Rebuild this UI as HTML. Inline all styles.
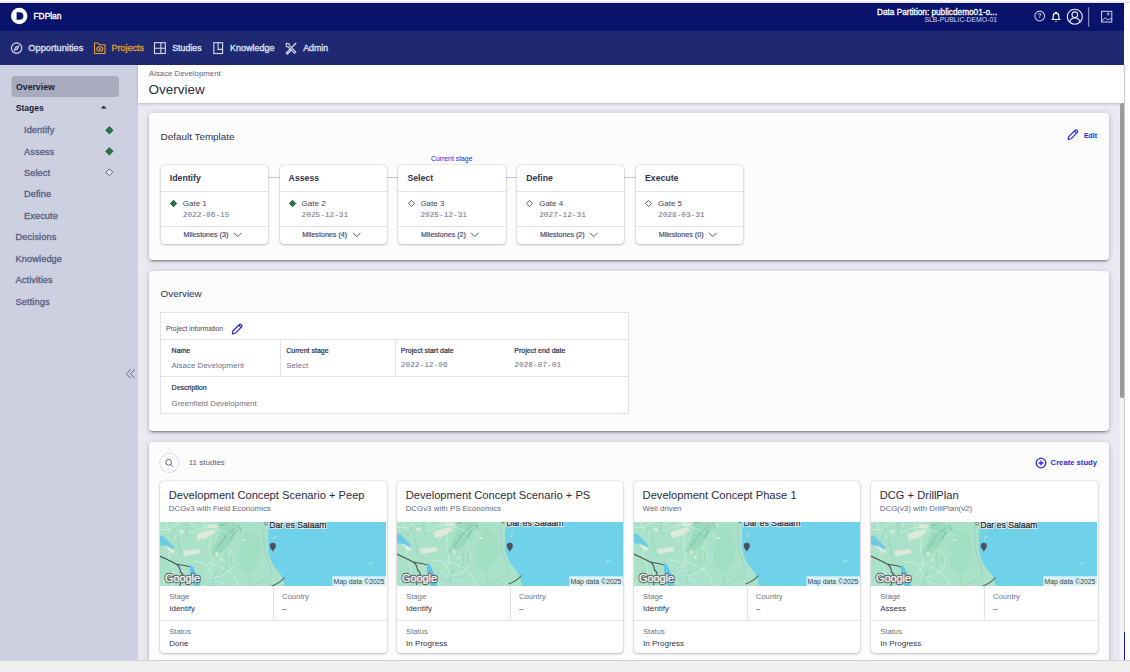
<!DOCTYPE html>
<html>
<head>
<meta charset="utf-8">
<title>FDPlan</title>
<style>
*{box-sizing:border-box;margin:0;padding:0}
html,body{width:1130px;height:672px;overflow:hidden;background:#fff;font-family:"Liberation Sans",sans-serif;color:#3b4060}
.abs{position:absolute}
#root{position:relative;width:1130px;height:672px;overflow:hidden;background:#fff}
#topstrip{left:0;top:0;width:1130px;height:3px;background:linear-gradient(#fbfaf6 0,#f6f5f2 45%,#d9d9da 100%)}
#hdr{left:0;top:3px;width:1124px;height:28px;background:#0a136b}
#nav{left:0;top:31px;width:1124px;height:34px;background:#1f2972}
#side{left:0;top:65px;width:138px;height:596px;background:#ccd0e1}
#main{left:138px;top:65px;width:986px;height:596px;background:#e9eaf2}
#phead{left:138px;top:65px;width:986px;height:37.500px;background:#fff;box-shadow:0 1px 2.500px rgba(0,0,0,.2)}
#bottom{left:0;top:660px;width:1130px;height:12px;background:#efefef;border-top:1px solid #d0d0d0}
.t{position:absolute;white-space:nowrap;line-height:1}
.navt{font-size:9px;color:#dfe1f3;top:43.900px;-webkit-text-stroke:.32px currentColor}
.sbi{font-size:9.3px;color:#585d7f;-webkit-text-stroke:.3px #585d7f;letter-spacing:.05px}
.card{position:absolute;background:#fcfcfd;border-radius:4px;box-shadow:0 3px 1px -2px rgba(0,0,0,.2),0 2px 2px 0 rgba(0,0,0,.14),0 1px 6px 0 rgba(0,0,0,.2)}
.h2{font-size:9.9px;color:#303247}
.stg{position:absolute;top:164.500px;width:107.200px;height:79.500px;background:#fff;border-radius:4px;box-shadow:0 0 1.500px rgba(0,0,0,.28),0 1px 2.500px rgba(0,0,0,.2)}
.ln{position:absolute;left:0;right:0;height:1px;background:#e0e2ee}
.sn{font-size:8.72px;font-weight:bold;color:#32344a}
.gt{font-size:8px;color:#3f4362}
.dt{font-size:7.78px;color:#6a6e88;font-family:"Liberation Mono",monospace}
.ms{font-size:7.15px;color:#454a74;-webkit-text-stroke:.18px #454a74}
.lb{font-size:7px;color:#30344f;-webkit-text-stroke:.22px #30344f}
.vl{font-size:7.9px;color:#6d7189}
.mono{font-family:"Liberation Mono",monospace;font-size:7.8px}
.sc{position:absolute;top:480.700px;width:226.500px;height:172px;background:#fff;border-radius:4px;box-shadow:0 0 1.500px rgba(0,0,0,.28),0 1px 2.500px rgba(0,0,0,.2);overflow:hidden}
.st{font-size:11.14px;color:#2b2d40}
.ss{font-size:7.88px;color:#646780}
.sl{font-size:7.7px;color:#6d7189}
.sv{font-size:8.05px;color:#2f3350}
</style>
</head>
<body>
<div id="root">
<div id="topstrip" class="abs"></div>
<div id="hdr" class="abs"></div>
<div id="nav" class="abs"></div>
<div id="side" class="abs"></div>
<div id="main" class="abs"></div>
<div id="phead" class="abs"></div>

<!-- HEADER -->
<svg class="abs" style="left:10px;top:7px" width="18" height="18" viewBox="0 0 18 18"><circle cx="9.2" cy="9" r="8.2" fill="#fff"/><path d="M6.6 5.2h3a3.8 3.8 0 0 1 0 7.6h-3z" fill="#0a136b"/></svg>
<div class="t" style="left:33.5px;top:11.5px;font-size:8.4px;color:#fff;-webkit-text-stroke:.35px #fff">FDPlan</div>
<div class="t" style="left:877px;top:9.100px;font-size:8.24px;color:#fff;-webkit-text-stroke:.3px #fff">Data Partition: publicdemo01-o...</div>
<div class="t" style="left:924.5px;top:17.300px;font-size:6.83px;color:#d5d8ee">SLB-PUBLIC-DEMO-01</div>
<svg class="abs" style="left:1030px;top:6px" width="90" height="22" viewBox="0 0 90 22" fill="none" stroke="#e8eaf6" stroke-width="1">
<circle cx="9.700" cy="10" r="4.900" stroke-width="1.050" stroke="#c5c9e6"/><text x="9.700" y="12.400" font-size="6.800" font-weight="bold" fill="#c5c9e6" stroke="none" text-anchor="middle" font-family="Liberation Sans">?</text>
<path d="M21.400 13.500h9.200M22.700 13.400c.6-.8.600-2 .6-3.600a2.700 2.700 0 0 1 5.400 0c0 1.600 0 2.800.6 3.600" stroke-width="1.150" stroke="#fff"/><path d="M24.900 15a1.200 1.200 0 0 0 2.200 0z" fill="#fff" stroke="none"/><circle cx="26" cy="6.400" r=".8" fill="#fff" stroke="none"/>
<circle cx="44.800" cy="10.700" r="7.500" stroke-width="1.100"/><circle cx="44.800" cy="8.700" r="2.800" stroke-width="1.100"/><path d="M39.600 16c.8-2.800 2.900-4 5.200-4s4.400 1.200 5.200 4" stroke-width="1.100"/>
<path d="M58.600 1.200v19.500" stroke="#8288bb" stroke-width="1.300"/>
<rect x="71.600" y="5.300" width="10.200" height="10.700" stroke-width="1" stroke="#d5d8f0"/><circle cx="78.200" cy="8" r="1.100" stroke-width=".8" stroke="#d5d8f0"/><path d="M71.600 15l3.700-3.300 2.600 2.200 2.100-1.400 1.800 1.500" stroke-width=".9" stroke="#d5d8f0"/>
</svg>
<!-- NAV -->
<svg class="abs" style="left:9px;top:40px" width="16" height="16" viewBox="0 0 16 16" fill="none" stroke="#d6d9ee" stroke-width="1"><circle cx="7.600" cy="8.100" r="5.200" stroke-width="1.200"/><path d="M10 5.700l-1.300 3.500-3.500 1.300 1.300-3.500z" stroke-width=".9" fill="#d6d9ee" fill-opacity=".55"/></svg>
<div class="t navt" style="left:28.300px;font-size:9.25px">Opportunities</div>
<svg class="abs" style="left:93px;top:41px" width="14" height="14" viewBox="0 0 14 14" fill="none" stroke="#e0a02e" stroke-width="1.100"><path d="M1.500 12.500v-10.500h3.500l1.300 1.700h5.700v8.800z"/><ellipse cx="6.800" cy="7.900" rx="3" ry="2.100"/><circle cx="6.800" cy="7.900" r="1" fill="#e0a02e" stroke="none"/></svg>
<div class="t navt" style="left:111.500px;color:#e0a02e">Projects</div>
<svg class="abs" style="left:153px;top:41px" width="14" height="14" viewBox="0 0 14 14" fill="none" stroke="#d6d9ee" stroke-width="1.100"><rect x="1.500" y="1.700" width="10.800" height="10.800"/><path d="M7.900 1.700v10.800M1.500 7.300h10.800"/></svg>
<div class="t navt" style="left:172.200px;font-size:8.85px">Studies</div>
<svg class="abs" style="left:212px;top:41px" width="14" height="14" viewBox="0 0 14 14" fill="none" stroke="#d6d9ee" stroke-width="1.100"><rect x="1.800" y="1.700" width="8.800" height="10.800"/><path d="M6.100 1.700v6.700h4.500"/></svg>
<div class="t navt" style="left:230px">Knowledge</div>
<svg class="abs" style="left:284px;top:41px" width="14" height="14" viewBox="0 0 14 14" fill="none" stroke="#d6d9ee" stroke-width="1.100" stroke-linecap="round"><path d="M2.200 2.300l2.900.5.400 1.900 6.300 6.300-1.300 1.300-6.300-6.300-1.800-.4z" stroke-width="1.100"/><path d="M11.900 2.200l-4.300 4.300M6.300 8l-4 4 1.100 1.100 4-4" stroke-width="1.300"/></svg>
<div class="t navt" style="left:303.200px;font-size:8.8px">Admin</div>
<!-- SIDEBAR -->
<div class="abs" style="left:11px;top:76px;width:107.500px;height:21px;background:#a8abbe;border-radius:4px;border-left:1.5px solid #e3c050"></div>
<div class="t" style="left:16px;top:83px;font-size:8.720px;font-weight:bold;color:#1b1d30">Overview</div>
<div class="t" style="left:15.700px;top:104.300px;font-size:8.540px;font-weight:bold;color:#1b1d30">Stages</div>
<svg class="abs" style="left:100px;top:104px" width="8" height="6" viewBox="0 0 8 6"><path d="M.7 4.600L3.700 1.700 6.700 4.600z" fill="#1b1d30"/></svg>
<div class="t sbi" style="left:24px;top:126.1px">Identify</div>
<svg class="abs" style="left:104px;top:124.6px" width="11" height="11" viewBox="0 0 11 11"><path d="M5.400 1.700L9 5.300 5.400 8.900 1.800 5.300z" fill="#1f7d3f" stroke="#123d22" stroke-width=".8"/></svg>
<div class="t sbi" style="left:24px;top:147.5px">Assess</div>
<svg class="abs" style="left:104px;top:146.0px" width="11" height="11" viewBox="0 0 11 11"><path d="M5.400 1.700L9 5.300 5.400 8.900 1.800 5.300z" fill="#1f7d3f" stroke="#123d22" stroke-width=".8"/></svg>
<div class="t sbi" style="left:24px;top:168.8px">Select</div>
<svg class="abs" style="left:104px;top:167.3px" width="11" height="11" viewBox="0 0 11 11"><path d="M5.400 1.900L8.800 5.300 5.400 8.700 2 5.300z" fill="#eceef6" stroke="#4a4e6a" stroke-width=".9"/></svg>
<div class="t sbi" style="left:24px;top:190.3px">Define</div>
<div class="t sbi" style="left:24px;top:211.7px">Execute</div>
<div class="t sbi" style="left:15.600px;top:233.2px">Decisions</div>
<div class="t sbi" style="left:15.600px;top:254.6px">Knowledge</div>
<div class="t sbi" style="left:15.600px;top:276.1px">Activities</div>
<div class="t sbi" style="left:15.600px;top:297.7px">Settings</div>
<svg class="abs" style="left:125px;top:368px" width="12" height="12" viewBox="0 0 12 12" fill="none" stroke="#5a5f80" stroke-width=".9"><path d="M5.500 1.300L1.500 5.800l4 4.500M9.700 1.300L5.700 5.800l4 4.500"/></svg>
<!-- PAGEHEAD -->
<div class="t" style="left:149px;top:69.800px;font-size:7.820px;color:#5f6486">Alsace Development</div>
<div class="t" style="left:148.600px;top:83px;font-size:13.460px;color:#2b2d40">Overview</div>
<!-- CARD1 -->
<div class="card" style="left:148.500px;top:113.300px;width:960.500px;height:146.500px"></div>
<div class="t h2" style="left:160.600px;top:132px">Default Template</div>
<svg class="abs" style="left:1066.400px;top:128.200px" width="13.600" height="13.600" viewBox="0 0 15 15" fill="none" stroke="#2424dc" stroke-width="1.250" stroke-linejoin="round"><path d="M2.300 12.700l.8-3.200 7-7a1.300 1.300 0 0 1 1.900 0l.5.500a1.300 1.300 0 0 1 0 1.900l-7 7z"/><path d="M9.300 3.300l2.400 2.400"/></svg>
<div class="t" style="left:1084px;top:132.600px;font-size:6.900px;font-weight:bold;color:#2a2ade">Edit</div>
<div class="t" style="left:431px;top:156.300px;font-size:6.850px;color:#2323e0">Current stage</div>
<div class="abs" style="left:262px;top:176.900px;width:380px;height:1px;background:#c3c7de"></div>
<div class="stg" style="left:160.8px">
<div class="t sn" style="left:9px;top:9.300px">Identify</div>
<div class="ln" style="top:26.500px"></div>
<svg class="abs" style="left:8.300px;top:34.200px" width="9" height="9" viewBox="0 0 9 9"><path d="M4.500 1.300L7.700 4.500 4.500 7.700 1.300 4.500z" fill="#1f7d3f" stroke="#123d22" stroke-width=".8"/></svg>
<div class="t gt" style="left:22px;top:35.500px">Gate 1</div>
<div class="t dt" style="left:22px;top:47.400px">2022-06-15</div>
<div class="ln" style="top:61.500px"></div>
<div class="t ms" style="left:22.700px;top:67.800px">Milestones (3)</div>
<svg class="abs" style="left:72px;top:66.900px" width="10" height="8" viewBox="0 0 10 8" fill="none" stroke="#3d4270" stroke-width=".9"><path d="M1 1.800l3.800 3.800 3.800-3.800"/></svg>
</div>
<div class="stg" style="left:279.6px">
<div class="t sn" style="left:9px;top:9.300px">Assess</div>
<div class="ln" style="top:26.500px"></div>
<svg class="abs" style="left:8.300px;top:34.200px" width="9" height="9" viewBox="0 0 9 9"><path d="M4.500 1.300L7.700 4.500 4.500 7.700 1.300 4.500z" fill="#1f7d3f" stroke="#123d22" stroke-width=".8"/></svg>
<div class="t gt" style="left:22px;top:35.500px">Gate 2</div>
<div class="t dt" style="left:22px;top:47.400px">2025-12-31</div>
<div class="ln" style="top:61.500px"></div>
<div class="t ms" style="left:22.700px;top:67.800px">Milestones (4)</div>
<svg class="abs" style="left:72px;top:66.900px" width="10" height="8" viewBox="0 0 10 8" fill="none" stroke="#3d4270" stroke-width=".9"><path d="M1 1.800l3.800 3.800 3.800-3.800"/></svg>
</div>
<div class="stg" style="left:398.4px">
<div class="t sn" style="left:9px;top:9.300px">Select</div>
<div class="ln" style="top:26.500px"></div>
<svg class="abs" style="left:8.300px;top:34.200px" width="9" height="9" viewBox="0 0 9 9"><path d="M4.500 1.400L7.600 4.500 4.500 7.600 1.400 4.500z" fill="#fff" stroke="#3c405c" stroke-width=".85"/></svg>
<div class="t gt" style="left:22px;top:35.500px">Gate 3</div>
<div class="t dt" style="left:22px;top:47.400px">2025-12-31</div>
<div class="ln" style="top:61.500px"></div>
<div class="t ms" style="left:22.700px;top:67.800px">Milestones (2)</div>
<svg class="abs" style="left:72px;top:66.900px" width="10" height="8" viewBox="0 0 10 8" fill="none" stroke="#3d4270" stroke-width=".9"><path d="M1 1.800l3.800 3.800 3.800-3.800"/></svg>
</div>
<div class="stg" style="left:517.2px">
<div class="t sn" style="left:9px;top:9.300px">Define</div>
<div class="ln" style="top:26.500px"></div>
<svg class="abs" style="left:8.300px;top:34.200px" width="9" height="9" viewBox="0 0 9 9"><path d="M4.500 1.400L7.600 4.500 4.500 7.600 1.400 4.500z" fill="#fff" stroke="#3c405c" stroke-width=".85"/></svg>
<div class="t gt" style="left:22px;top:35.500px">Gate 4</div>
<div class="t dt" style="left:22px;top:47.400px">2027-12-31</div>
<div class="ln" style="top:61.500px"></div>
<div class="t ms" style="left:22.700px;top:67.800px">Milestones (2)</div>
<svg class="abs" style="left:72px;top:66.900px" width="10" height="8" viewBox="0 0 10 8" fill="none" stroke="#3d4270" stroke-width=".9"><path d="M1 1.800l3.800 3.800 3.800-3.800"/></svg>
</div>
<div class="stg" style="left:636.0px">
<div class="t sn" style="left:9px;top:9.300px">Execute</div>
<div class="ln" style="top:26.500px"></div>
<svg class="abs" style="left:8.300px;top:34.200px" width="9" height="9" viewBox="0 0 9 9"><path d="M4.500 1.400L7.600 4.500 4.500 7.600 1.400 4.500z" fill="#fff" stroke="#3c405c" stroke-width=".85"/></svg>
<div class="t gt" style="left:22px;top:35.500px">Gate 5</div>
<div class="t dt" style="left:22px;top:47.400px">2028-03-31</div>
<div class="ln" style="top:61.500px"></div>
<div class="t ms" style="left:22.700px;top:67.800px">Milestones (0)</div>
<svg class="abs" style="left:72px;top:66.900px" width="10" height="8" viewBox="0 0 10 8" fill="none" stroke="#3d4270" stroke-width=".9"><path d="M1 1.800l3.800 3.800 3.800-3.800"/></svg>
</div>
<!-- CARD2 -->
<div class="card" style="left:148.500px;top:270.500px;width:960.500px;height:160.300px"></div>
<div class="t h2" style="left:160.600px;top:289.200px">Overview</div>
<div class="abs" style="left:160px;top:312px;width:469px;height:102px;border:1px solid #e1e2ed;background:#fff"></div>
<div class="abs" style="left:160px;top:339px;width:469px;height:1px;background:#e1e2ed"></div>
<div class="abs" style="left:160px;top:376px;width:469px;height:1px;background:#e1e2ed"></div>
<div class="abs" style="left:280px;top:339px;width:1px;height:37px;background:#e1e2ed"></div>
<div class="abs" style="left:394.500px;top:339px;width:1px;height:37px;background:#e1e2ed"></div>
<div class="t" style="left:166px;top:326.200px;font-size:6.870px;color:#3f4362">Project information</div>
<svg class="abs" style="left:230px;top:321.500px" width="14" height="14" viewBox="0 0 14 14" fill="none" stroke="#1c1cd8" stroke-width="1.100" stroke-linejoin="round"><path d="M2.200 12l.7-3 6.500-6.500a1.200 1.200 0 0 1 1.700 0l.6.600a1.200 1.200 0 0 1 0 1.700l-6.500 6.500z"/><path d="M8.700 3.200l2.300 2.300"/></svg>
<div class="t lb" style="left:171.600px;top:347.400px">Name</div>
<div class="t vl" style="left:171.600px;top:362px">Alsace Development</div>
<div class="t lb" style="left:286.200px;top:347.400px">Current stage</div>
<div class="t vl" style="left:286.200px;top:362px">Select</div>
<div class="t lb" style="left:400.800px;top:347.400px">Project start date</div>
<div class="t vl mono" style="left:400.800px;top:362.300px">2022-12-06</div>
<div class="t lb" style="left:514.300px;top:347.400px">Project end date</div>
<div class="t vl mono" style="left:514.300px;top:362.300px">2028-07-01</div>
<div class="t lb" style="left:171.600px;top:384.400px">Description</div>
<div class="t vl" style="left:171.600px;top:400px">Greenfield Development</div>
<!-- CARD3 -->
<svg width="0" height="0" style="position:absolute"><defs>
<filter id="bl" x="0" y="0" width="100%" height="100%"><feGaussianBlur stdDeviation=".5"/></filter>
<clipPath id="landc"><path d="M-12-12H108.500V0C107.300 8 107.200 21 108 30.500C109.500 37.500 112 42 114.500 45.500C118 50 121 53 122 55.500L128 78H-12z"/></clipPath>
<g id="mapg">
<g filter="url(#bl)">
<rect x="-12" y="-12" width="250" height="90" fill="#70d2ea"/>
<path d="M-12-12H108.500V0C107.300 8 107.200 21 108 30.500C109.500 37.500 112 42 114.500 45.500C118 50 121 53 122 55.500L128 78H-12z" fill="#a9e2c8"/>
<path d="M58 0l14 0 8 6-6 8-8 12-10 8-6-2 6-12 4-10z" fill="#93d6b7" opacity=".7"/>
<path d="M84 8l12 2 6 14-4 18-10 10-10-6 2-16z" fill="#9cdcbe" opacity=".6"/>
<path d="M36 12l16-5 4 3-10 6-9 2zM22 29l17-2 1 4-16 3zM4 24l6 1 5 5-4 1zM55 30l3 0 0 4-3 0zM60 36l2 0 0 3-2 0zM82 17l3 0 0 2-3 0zM19 8l4 0 0 3-4 0zM46 2l12 1-2 3-9 0z" fill="#f5ece0" opacity=".7"/>
<g clip-path="url(#landc)">
<path d="M32.4 5.6 L30.9 0.8 L27.7 -3.0 L24.7 -7.1 L23.7 -12.0 L21.3 -16.3 M8.6 24.3 L9.3 29.2 L8.3 34.1 L9.2 39.1 L11.4 43.5 L13.1 48.3 L12.5 53.2 L11.5 58.1 L11.1 63.1 L8.4 67.3 M4.7 55.1 L3.2 59.9 L1.5 64.6 L-0.6 69.1 L-3.4 73.2 L-4.4 78.1 L-5.8 83.0 M18.8 1.8 L15.6 -2.1 L11.5 -4.9 L8.0 -8.4 L4.2 -11.6 L-0.2 -14.1 L-4.3 -17.0 L-8.5 -19.6 L-13.2 -21.4 L-17.2 -24.4 M69.9 12.1 L65.4 9.9 L60.7 8.3 L55.8 7.1 L51.1 5.3 L46.2 5.6 L41.2 5.9 L36.5 7.8 L32.3 10.3 L27.3 10.9 M42.2 62.3 L46.4 65.0 L49.4 69.0 L53.0 72.4 L56.0 76.5 L58.5 80.8 L60.7 85.3 L63.0 89.7 L63.8 94.6 L62.4 99.4 M47.4 41.5 L52.3 42.4 L57.1 43.8 L61.6 45.9 L66.3 47.9 L70.3 50.7 L73.1 54.9 L76.4 58.7 L77.8 63.5 L79.8 68.0 L81.4 72.8 M49.4 10.3 L49.5 15.3 L50.1 20.2 L48.9 25.1 L49.7 30.0 L50.9 34.9 L51.7 39.8 L50.7 44.7 L48.2 49.0 L44.3 52.2 L41.2 56.1 M41.5 20.1 L43.9 15.7 L44.7 10.8 L44.3 5.8 L42.5 1.1 L40.6 -3.5 L39.2 -8.3 M26.3 -4.7 L21.7 -2.8 L17.5 -0.0 L14.6 4.1 L10.5 6.9 L5.5 7.6 L0.5 7.5 L-4.3 6.3 M45.7 56.0 L50.7 55.9 L55.6 55.4 L60.5 54.3 L64.6 51.5 L69.1 49.2 L72.1 45.2 L73.2 40.3 L72.9 35.4 L70.9 30.8 L68.3 26.5 M5.3 -5.0 L6.1 -0.1 L6.4 4.9 L8.7 9.4 L12.3 12.9 L16.2 16.0 M63.4 61.9 L58.6 60.6 L54.5 57.7 L52.3 53.2 L49.9 48.8 L47.5 44.5 L43.5 41.5 L38.6 40.3 L33.6 39.8 M26.5 53.0 L30.2 56.3 L32.2 60.9 L34.7 65.2 L36.4 69.9 L36.1 74.9" stroke="#d9f2e6" stroke-width=".8" fill="none" opacity=".8"/>
<path d="M75.8 15.9 L74.0 12.3 L71.4 9.3 L68.4 6.6 L64.7 5.1 M77.2 32.3 L78.4 28.5 L80.1 24.9 L82.8 21.8 L86.1 19.6 L88.6 16.5 L90.2 12.8 M40.1 51.2 L41.8 54.8 L45.0 57.2 L49.0 57.9 L53.0 57.7 L56.8 56.5 L60.8 56.1 L64.5 57.5 M44.7 60.6 L48.2 58.7 L50.8 55.6 L53.2 52.4 L55.0 48.9 L56.8 45.3 L60.1 43.0 M61.0 -4.9 L64.9 -5.9 L68.0 -8.5 L71.4 -10.5 L75.4 -10.9 L79.4 -10.3 L83.0 -8.7 M47.8 7.5 L47.1 3.6 L48.2 -0.3 L50.2 -3.8 L51.9 -7.4 L54.5 -10.4 L55.7 -14.3 M15.9 64.5 L19.2 66.7 L21.8 69.8 L25.2 71.8 L27.8 74.8 L28.8 78.7 L29.1 82.7 L30.0 86.6 L30.7 90.6 M13.1 -4.0 L16.4 -6.2 L20.2 -7.5 L23.3 -10.0 L27.2 -10.9 L30.7 -12.8 L34.7 -13.4 L38.0 -15.6 L40.5 -18.8 L43.0 -21.9 M76.4 17.8 L72.4 18.5 L68.4 18.1 L64.9 16.3 L61.7 13.9 L59.4 10.7" stroke="#9dd3e2" stroke-width=".6" fill="none" opacity=".7"/>
<path d="M56.5 49.6 L54.6 53.2 L52.7 56.6 L52.5 60.6 L52.6 64.6 M26.5 0.2 L26.5 4.2 L26.1 8.2 L27.2 12.1 L29.8 15.1 M71.4 31.8 L70.3 35.7 L70.9 39.6 L72.7 43.2 M13.8 5.9 L13.3 9.8 L11.3 13.3 L9.4 16.8 M65.1 30.3 L65.5 34.3 L65.8 38.3 L66.2 42.3 L64.8 46.0 L62.7 49.5 M88.9 56.5 L89.2 60.5 L90.8 64.2 L93.7 66.9 L96.8 69.5 M16.5 14.4 L18.0 18.1 L18.0 22.1 L19.3 25.9 L19.8 29.9 L19.6 33.9 M22.9 53.0 L19.9 55.7 L18.3 59.3 L15.4 62.1 L13.6 65.6" stroke="#8fd0b3" stroke-width="1.200" fill="none" opacity=".6"/>
</g>
<path d="M60 4l6-3M56 27l10-14 8-7M70 18l4-8M78 2l3 8" stroke="#6fae93" stroke-width="1" fill="none" opacity=".7"/>
<path d="M-12 10l15 4.200 4.500 4.500 6.500 6.500-1.500 2-6.500-3.500-18-1.500z" fill="#6ecbe8"/>
<path d="M29.500 43l2.500 1 3.500 7 3.500 8 .5 13h-6l-1-12-3-9z" fill="#5fc4ea"/>
<path d="M-6 32C2 35 8 38 15.700 42C20 43.300 24 42.700 29.200 44.900M15.700 42C18 43.500 19.500 45 20 49.900C21 51.500 23 52 22.500 54C21 57 20 60 19 65" stroke="#4d5258" stroke-width="1.100" fill="none"/>
<path d="M104 0c-1 8-1 16 0 26 1 8 4 14 6 20 2 5 0 9-6 12l-10 5" stroke="#9fc6c9" stroke-width=".8" fill="none"/>
<path d="M111 64c5-1.500 9-4 13-8.500" stroke="#4d5a52" stroke-width="1.100" fill="none"/>
<path d="M112 16.500l3-3.500 1 1-3 3.500z" fill="#a9e2c8"/>
<path d="M208 41.500l6-1.500-5 2.500z" fill="#c8eef2"/>
</g>
<g font-family="Liberation Sans" font-size="8.680"><text x="108.700" y="5.700" stroke="#fff" stroke-width="2.200" stroke-linejoin="round" fill="#fff" opacity=".9">Dar es Salaam</text><text x="108.700" y="5.700" fill="#33383e" stroke="#33383e" stroke-width=".35">Dar es Salaam</text></g>
<circle cx="105.600" cy="1.400" r="1.400" fill="#fff" stroke="#3a3f45" stroke-width=".7"/>
</g>
<g id="mapo">
<path d="M112.300 20.800a3.100 3.100 0 0 1 3.100 3.100c0 2.200-2.300 3.600-3.100 5.900-.8-2.300-3.100-3.700-3.100-5.900a3.100 3.100 0 0 1 3.100-3.100z" fill="#4e5260"/>
<g font-family="Liberation Sans" font-size="11" letter-spacing="-.05"><text x="4.400" y="59.800" stroke="#565b5f" stroke-width="2.300" stroke-linejoin="round" fill="#565b5f">Google</text><text x="4.400" y="59.800" fill="#f1f1f1" stroke="#f1f1f1" stroke-width=".45">Google</text></g>
<rect x="172" y="54.300" width="54" height="9.700" fill="#fff" opacity=".72"/>
<text x="173" y="61.600" font-family="Liberation Sans" font-size="6.880" fill="#3c3f44">Map data ©2025</text>
</g>
</defs></svg>
<div class="card" style="left:148.500px;top:441.600px;width:960.500px;height:240px"></div>
<svg class="abs" style="left:158px;top:452px" width="22" height="22" viewBox="0 0 22 22" fill="none"><circle cx="11.200" cy="10.900" r="9.600" stroke="#d5d7e4" stroke-width=".9" fill="#fff"/><circle cx="10.600" cy="10.300" r="2.900" stroke="#4a4e6c" stroke-width=".9"/><path d="M12.700 12.400l2.500 2.500" stroke="#4a4e6c" stroke-width=".9"/></svg>
<div class="t" style="left:188.700px;top:459.400px;font-size:8.090px;color:#5b5f7c">11 studies</div>
<svg class="abs" style="left:1034.400px;top:455.800px" width="14" height="14" viewBox="0 0 14 14" fill="none" stroke="#2a2ade" stroke-width="1.300"><circle cx="7" cy="7" r="4.800"/><path d="M7 4.500v5M4.500 7h5"/></svg>
<div class="t" style="left:1050.600px;top:459.200px;font-size:7.680px;font-weight:bold;color:#2a2ade">Create study</div>
<div class="sc" style="left:160px">
<div class="t st" style="left:8.800px;top:9.500px">Development Concept Scenario + Peep</div>
<div class="t ss" style="left:8.800px;top:24.300px">DCGv3 with Field Economics</div>
<svg class="abs" style="left:0;top:41.500px" width="226" height="63.500" viewBox="-.5 0 226 63.500"><use href="#mapg" y="0"/><use href="#mapo"/></svg>
<div class="abs" style="left:113.300px;top:105px;width:1px;height:35px;background:#dfe1ec"></div>
<div class="abs" style="left:0;top:139.800px;width:226.500px;height:1px;background:#dfe1ec"></div>
<div class="t sl" style="left:9.200px;top:112.600px">Stage</div>
<div class="t sv" style="left:9.200px;top:124.300px">Identify</div>
<div class="t sl" style="left:122px;top:112.600px">Country</div>
<div class="t sv" style="left:122px;top:124.300px">–</div>
<div class="t sl" style="left:9.200px;top:147px">Status</div>
<div class="t sv" style="left:9.200px;top:158.900px">Done</div>
</div>
<div class="sc" style="left:396.9px">
<div class="t st" style="left:8.800px;top:9.500px">Development Concept Scenario + PS</div>
<div class="t ss" style="left:8.800px;top:24.300px">DCGv3 with PS Economics</div>
<svg class="abs" style="left:0;top:41.500px" width="226" height="63.500" viewBox="-.5 0 226 63.500"><use href="#mapg" y="-2"/><use href="#mapo"/></svg>
<div class="abs" style="left:113.300px;top:105px;width:1px;height:35px;background:#dfe1ec"></div>
<div class="abs" style="left:0;top:139.800px;width:226.500px;height:1px;background:#dfe1ec"></div>
<div class="t sl" style="left:9.200px;top:112.600px">Stage</div>
<div class="t sv" style="left:9.200px;top:124.300px">Identify</div>
<div class="t sl" style="left:122px;top:112.600px">Country</div>
<div class="t sv" style="left:122px;top:124.300px">–</div>
<div class="t sl" style="left:9.200px;top:147px">Status</div>
<div class="t sv" style="left:9.200px;top:158.900px">In Progress</div>
</div>
<div class="sc" style="left:633.8px">
<div class="t st" style="left:8.800px;top:9.500px">Development Concept Phase 1</div>
<div class="t ss" style="left:8.800px;top:24.300px">Well driven</div>
<svg class="abs" style="left:0;top:41.500px" width="226" height="63.500" viewBox="-.5 0 226 63.500"><use href="#mapg" y="-2"/><use href="#mapo"/></svg>
<div class="abs" style="left:113.300px;top:105px;width:1px;height:35px;background:#dfe1ec"></div>
<div class="abs" style="left:0;top:139.800px;width:226.500px;height:1px;background:#dfe1ec"></div>
<div class="t sl" style="left:9.200px;top:112.600px">Stage</div>
<div class="t sv" style="left:9.200px;top:124.300px">Identify</div>
<div class="t sl" style="left:122px;top:112.600px">Country</div>
<div class="t sv" style="left:122px;top:124.300px">–</div>
<div class="t sl" style="left:9.200px;top:147px">Status</div>
<div class="t sv" style="left:9.200px;top:158.900px">In Progress</div>
</div>
<div class="sc" style="left:871px">
<div class="t st" style="left:8.800px;top:9.500px">DCG + DrillPlan</div>
<div class="t ss" style="left:8.800px;top:24.300px">DCG(v3) with DrillPlan(v2)</div>
<svg class="abs" style="left:0;top:41.500px" width="226" height="63.500" viewBox="-.5 0 226 63.500"><use href="#mapg" y="0"/><use href="#mapo"/></svg>
<div class="abs" style="left:113.300px;top:105px;width:1px;height:35px;background:#dfe1ec"></div>
<div class="abs" style="left:0;top:139.800px;width:226.500px;height:1px;background:#dfe1ec"></div>
<div class="t sl" style="left:9.200px;top:112.600px">Stage</div>
<div class="t sv" style="left:9.200px;top:124.300px">Assess</div>
<div class="t sl" style="left:122px;top:112.600px">Country</div>
<div class="t sv" style="left:122px;top:124.300px">–</div>
<div class="t sl" style="left:9.200px;top:147px">Status</div>
<div class="t sv" style="left:9.200px;top:158.900px">In Progress</div>
</div>
<!-- SCROLL -->
<div class="abs" style="left:1120px;top:103px;width:4.500px;height:558px;background:#f2f2f2"></div>
<div class="abs" style="left:1120px;top:103px;width:4.500px;height:294.500px;background:#9b9b9b;border-radius:2px"></div>
<div class="abs" style="left:1124px;top:65px;width:1px;height:568px;background:#c9c9c9"></div>
<div class="abs" style="left:1124px;top:632px;width:1.300px;height:28px;background:#1a1aa8"></div>

<div id="bottom" class="abs"></div>
</div>
</body>
</html>
